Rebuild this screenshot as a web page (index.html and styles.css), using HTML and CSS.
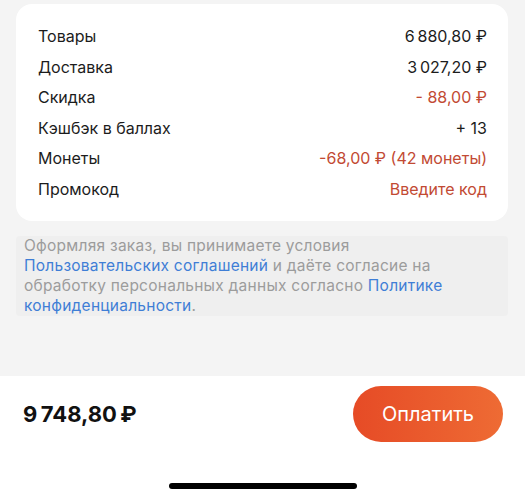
FILE: index.html
```html
<!DOCTYPE html>
<html lang="ru">
<head>
<meta charset="utf-8">
<link rel="stylesheet" href="styles.css">
</head>
<body>
<div class="page">
  <main class="content">
    <section class="card">
      <div class="row"><span>Товары</span><span>6&#8239;880,80 ₽</span></div>
      <div class="row"><span>Доставка</span><span>3&#8239;027,20 ₽</span></div>
      <div class="row"><span>Скидка</span><span class="red">- 88,00 ₽</span></div>
      <div class="row"><span>Кэшбэк в баллах</span><span>+ 13</span></div>
      <div class="row"><span>Монеты</span><span class="red">-68,00 ₽ (42 монеты)</span></div>
      <div class="row"><span>Промокод</span><span class="red">Введите код</span></div>
    </section>
    <p class="terms">Оформляя заказ, вы принимаете условия <a class="link">Пользовательских соглашений</a> и даёте согласие на обработку персональных данных согласно <a class="link">Политике конфиденциальности</a>.</p>
  </main>
  <footer class="footer">
    <div class="pay">
      <span class="total">9&#8239;748,80&#8239;₽</span>
      <button class="btn">Оплатить</button>
    </div>
    <div class="home"></div>
  </footer>
</div>
</body>
</html>
```
FILE: styles.css
```css
* { box-sizing: border-box; }
html, body { margin: 0; padding: 0; }
body {
  width: 525px;
  height: 500px;
  overflow: hidden;
  font-family: Inter, "Noto Sans", sans-serif;
  background: #f4f4f4;
}
.page {
  display: flex;
  flex-direction: column;
  height: 500px;
}
.content {
  height: 376px;
  padding: 4px 17px 0 16px;
  background: #f4f4f4;
}
.card {
  background: #fff;
  border-radius: 16px;
  padding: 17px 21px 16px 22px;
  display: flex;
  flex-direction: column;
}
.row {
  display: flex;
  justify-content: space-between;
  font-size: 16px;
  line-height: 30.6px;
  color: #1c1c1c;
}
.red { color: #c24a33; }
.terms {
  margin: 15px 0 0 0;
  padding: 0 28px 0 8px;
  background: #efefef;
  border-radius: 4px;
  font-size: 15.5px;
  letter-spacing: 0.25px;
  line-height: 20px;
  color: #9c9c9c;
}
.link { color: #3f7ed6; }
.footer {
  flex: 1;
  background: #fff;
  display: flex;
  flex-direction: column;
  align-items: center;
}
.pay {
  width: 100%;
  display: flex;
  justify-content: space-between;
  align-items: center;
  padding: 10px 22px 0 23px;
}
.total {
  font-size: 22px;
  font-weight: 700;
  color: #111;
  letter-spacing: -0.4px;
}
.btn {
  width: 150px;
  height: 56px;
  border: none;
  border-radius: 28px;
  background: linear-gradient(90deg, #e64b26, #ee6b34);
  color: #fff;
  font-family: inherit;
  font-size: 20px;
  padding: 0;
}
.home {
  margin-top: 41px;
  width: 188px;
  height: 6px;
  border-radius: 3px;
  background: #000;
}
```
